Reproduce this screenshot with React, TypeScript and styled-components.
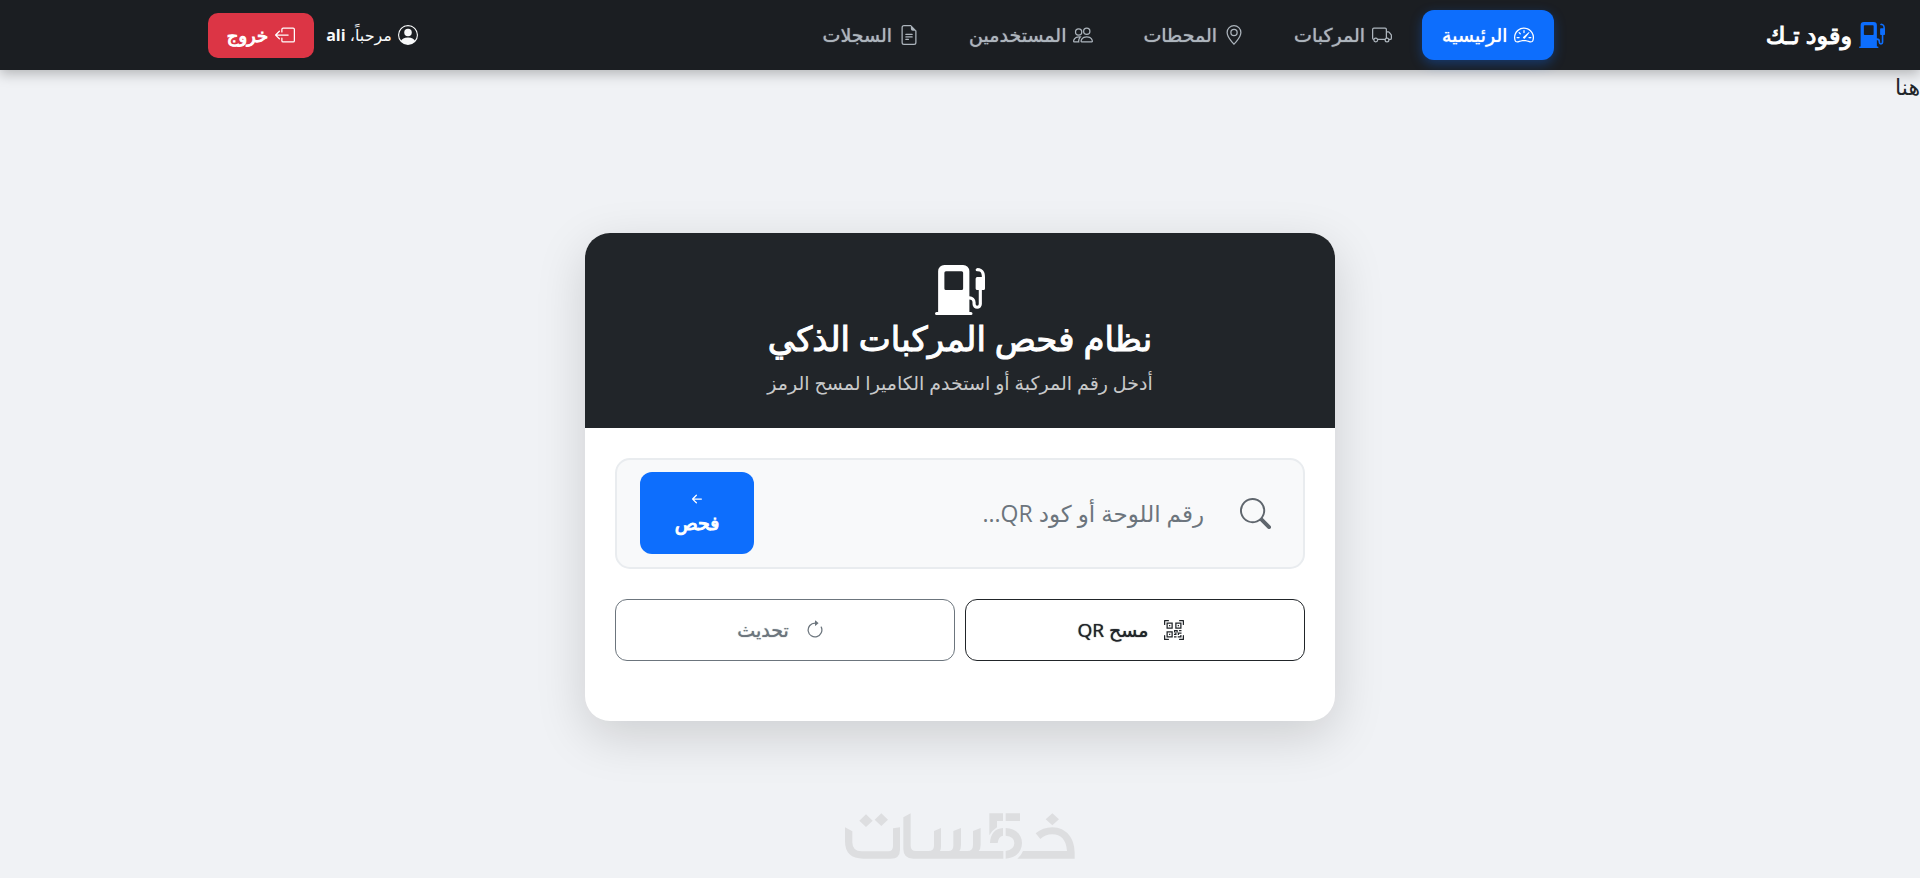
import React from "react";
import styled, { createGlobalStyle, css } from "styled-components";
import {
  BsArrowClockwise,
  BsArrowLeftShort,
  BsBoxArrowLeft,
  BsFileEarmarkText,
  BsFuelPumpFill,
  BsGeoAlt,
  BsPeople,
  BsPersonCircle,
  BsQrCodeScan,
  BsSearch,
  BsSpeedometer2,
  BsTruck,
} from "react-icons/bs";

const GlobalStyle = createGlobalStyle`
  *, *::before, *::after { box-sizing: border-box; }
  body {
    margin: 0;
    background: #f0f2f5;
    color: #212529;
    font-family: "Segoe UI", "Open Sans", "Noto Sans", "DejaVu Sans", sans-serif;
    font-size: 18px;
    line-height: 28px;
  }
  button, input { font: inherit; }
`;

/* Arabic faces jump from regular to a very wide bold; these thicken the regular one. */
const semibold = css`
  font-weight: 400;
  text-shadow: 0 0 1px currentColor;
`;

const bold = css`
  font-weight: 400;
  -webkit-text-stroke: 1px currentColor;
`;

const Page = styled.div`
  min-height: 100vh;
  display: flex;
  flex-direction: column;
`;

const Navbar = styled.header`
  height: 70px;
  display: flex;
  align-items: center;
  padding: 0 35px;
  background: #1b1e22;
  color: #fff;
  box-shadow: 0 4px 12px rgba(0, 0, 0, 0.25);
`;

const Brand = styled.a`
  display: flex;
  align-items: center;
  gap: 7px;
  color: #fff;
  font-size: 24px;
  ${bold}
  text-decoration: none;
  white-space: nowrap;

  svg {
    color: #0d6efd;
    font-size: 26px;
  }
`;

const NavList = styled.nav`
  display: flex;
  gap: 10px;
  margin-inline-start: 11vw;
`;

const NavLink = styled.a<{ $active?: boolean }>`
  height: 50px;
  display: flex;
  align-items: center;
  gap: 7px;
  padding: 0 20px;
  border-radius: 12px;
  color: #adb5bd;
  font-size: 19px;
  ${semibold}
  text-decoration: none;
  white-space: nowrap;

  svg {
    font-size: 20px;
  }

  ${(p) =>
    p.$active &&
    css`
      background: #0d6efd;
      color: #fff;
      box-shadow: 0 4px 12px rgba(13, 110, 253, 0.35);
    `}
`;

const Account = styled.div`
  display: flex;
  align-items: center;
  gap: 12px;
  margin-inline-start: auto;
  margin-inline-end: 9vw;
`;

const Greeting = styled.span`
  display: flex;
  align-items: center;
  gap: 6px;
  color: #f8f9fa;
  font-size: 16px;
  white-space: nowrap;

  svg {
    font-size: 20px;
  }
`;

const LogoutButton = styled.button`
  height: 45px;
  display: flex;
  align-items: center;
  gap: 7px;
  padding: 0 19px;
  border: 0;
  border-radius: 10px;
  background: #dc3545;
  color: #fff;
  ${bold}

  svg {
    font-size: 20px;
  }
`;

const Notice = styled.p`
  margin: 0;
  height: 34px;
  font-size: 22px;
  line-height: 32px;
`;

const Main = styled.main`
  flex: 1;
  display: flex;
  flex-direction: column;
  align-items: center;
  justify-content: space-between;
  padding: 129px 16px 19px;
`;

const Card = styled.section`
  width: 100%;
  max-width: 750px;
  border-radius: 25px;
  overflow: hidden;
  background: #fff;
  box-shadow: 0 15px 50px rgba(0, 0, 0, 0.15);
`;

const CardHeader = styled.div`
  height: 195px;
  display: flex;
  flex-direction: column;
  align-items: center;
  padding-top: 32px;
  background: #212529;
  color: #fff;

  svg {
    font-size: 50px;
  }
`;

const Title = styled.h1`
  margin: 0;
  font-size: 34px;
  ${bold}
  line-height: 46px;
`;

const Subtitle = styled.p`
  margin: 8px 0 0;
  color: #c8c9ca;
  font-size: 19px;
`;

const CardBody = styled.div`
  padding: 30px 30px 60px;
`;

const SearchBox = styled.form`
  height: 111px;
  display: flex;
  align-items: center;
  gap: 36px;
  padding: 0 32px 1px 23px;
  border: 2px solid #e9ecef;
  border-radius: 15px;
  background: #f8f9fa;

  label {
    display: flex;
    color: #5f666d;
    font-size: 31px;
  }
`;

const SearchInput = styled.input`
  flex: 1;
  min-width: 0;
  height: 48px;
  padding: 0;
  border: 0;
  outline: 0;
  background: transparent;
  color: #212529;
  font-size: 23px;
  line-height: 40px;

  &::placeholder {
    color: #6c757d;
    opacity: 1;
  }
`;

const CheckButton = styled.button`
  width: 114px;
  height: 82px;
  display: flex;
  flex-direction: column;
  align-items: center;
  justify-content: center;
  padding: 0;
  border: 0;
  border-radius: 12px;
  background: #0d6efd;
  color: #fff;
  font-size: 19px;
  ${bold}

  svg {
    font-size: 20px;
  }
`;

const Actions = styled.div`
  display: grid;
  grid-template-columns: 1fr 1fr;
  gap: 10px;
  margin-top: 30px;
`;

const ActionButton = styled.button<{ $tone: string }>`
  height: 62px;
  display: flex;
  align-items: center;
  justify-content: center;
  gap: 16px;
  padding: 0 12px 0 4px;
  border: 1px solid ${(p) => p.$tone};
  border-radius: 12px;
  background: #fff;
  color: ${(p) => p.$tone};
  font-size: 19px;
  ${semibold}

  svg {
    font-size: 20px;
  }
`;

const Watermark = styled.svg`
  width: 230px;
  height: 46px;
  fill: #dddee0;
`;

const links = [
  { label: "الرئيسية", Icon: BsSpeedometer2, active: true },
  { label: "المركبات", Icon: BsTruck },
  { label: "المحطات", Icon: BsGeoAlt },
  { label: "المستخدمين", Icon: BsPeople },
  { label: "السجلات", Icon: BsFileEarmarkText },
];

function KhamsatLogo() {
  return (
    <Watermark viewBox="75 70 690 138" role="img" aria-label="خمسات">
      <path d="M138 74l20 19-20 19-20-19zM184 71l20 19-20 19-20-19zM697 71l20 18-20 18-20-18z" />
      <path d="M75 113L97 125V158Q97 185 125 185H205Q219 185 219 170V116L240 113V180Q240 207 212 207H130Q75 207 75 155Z" />
      <path d="M250 83L272 71V168Q272 184 288 184H325Q342 184 342 168V124L363 115V170Q363 180 360 184H385Q400 184 400 168V124L423 115V165Q423 178 418 184H442Q459 184 459 166V124L482 115V165Q482 178 476 184H550V207H280Q250 207 250 178Z" />
      <path d="M508 71H549V94H531V113Q518 121 508 137ZM557 71H600V94H557ZM549 115Q512 118 510 160H533Q535 141 549 138Z" />
      <path d="M557 115C590 117 606 136 606 160S590 205 557 207V184Q583 180 583 160T557 138Z" />
      <path d="M647 131Q668 113 697 113C740 114 764 146 764 190V207H592Q604 198 609 184H741C739 150 722 134 697 134Q675 134 661 148Z" />
    </Watermark>
  );
}

export default function App() {
  return (
    <Page dir="rtl" lang="ar">
      <GlobalStyle />
      <Navbar>
        <Brand href="#">
          <BsFuelPumpFill />
          وقود تـك
        </Brand>
        <NavList>
          {links.map(({ label, Icon, active }) => (
            <NavLink key={label} href="#" $active={active}>
              <Icon />
              {label}
            </NavLink>
          ))}
        </NavList>
        <Account>
          <Greeting>
            <BsPersonCircle />
            <span>
              مرحباً، <strong>ali</strong>
            </span>
          </Greeting>
          <LogoutButton type="button">
            <BsBoxArrowLeft />
            خروج
          </LogoutButton>
        </Account>
      </Navbar>
      <Notice>هنا</Notice>
      <Main>
        <Card>
          <CardHeader>
            <BsFuelPumpFill />
            <Title>نظام فحص المركبات الذكي</Title>
            <Subtitle>أدخل رقم المركبة أو استخدم الكاميرا لمسح الرمز</Subtitle>
          </CardHeader>
          <CardBody>
            <SearchBox onSubmit={(e) => e.preventDefault()}>
              <label htmlFor="plate" aria-label="رقم اللوحة">
                <BsSearch />
              </label>
              <SearchInput id="plate" type="text" placeholder="رقم اللوحة أو كود QR..." />
              <CheckButton type="submit">
                <BsArrowLeftShort />
                فحص
              </CheckButton>
            </SearchBox>
            <Actions>
              <ActionButton type="button" $tone="#212529">
                <BsQrCodeScan />
                مسح QR
              </ActionButton>
              <ActionButton type="button" $tone="#6c757d">
                <BsArrowClockwise />
                تحديث
              </ActionButton>
            </Actions>
          </CardBody>
        </Card>
        <KhamsatLogo />
      </Main>
    </Page>
  );
}
